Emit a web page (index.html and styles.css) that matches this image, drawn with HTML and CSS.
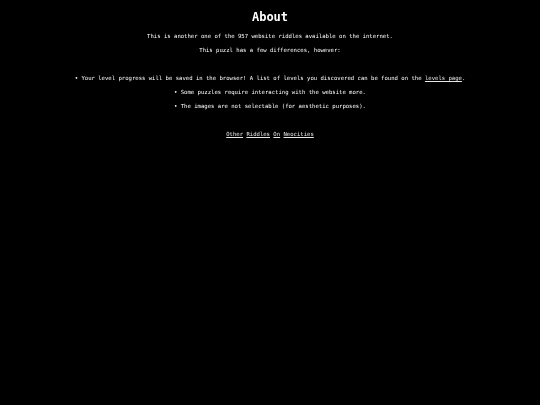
FILE: index.html
```html
<!DOCTYPE html>
<html>
<head>
<meta charset="utf-8">
<link rel="stylesheet" href="styles.css">
</head>
<body>
<main class="page">
  <h1 class="title">About</h1>
  <section class="intro">
    <p class="line">This is another one of the 957 website riddles available on the internet.</p>
    <p class="line">This puzzl has a few differences, however:</p>
  </section>
  <ul class="notes">
    <li class="line">• Your level progress will be saved in the browser! A list of levels you discovered can be found on the <a class="link" href="#">levels page</a>.</li>
    <li class="line">• Some puzzles require interacting with the website more.</li>
    <li class="line">• The images are not selectable (for aesthetic purposes).</li>
  </ul>
  <nav class="footer line">
    <a class="link" href="#">Other</a> <a class="link" href="#">Riddles</a> <a class="link" href="#">On</a> <a class="link" href="#">Neocities</a>
  </nav>
</main>
</body>
</html>
```

FILE: styles.css
```css
html, body {
  margin: 0;
  padding: 0;
  background: #000;
}
body {
  width: 540px;
  height: 405px;
  color: #ffffff;
  font-family: "DejaVu Sans Mono", "Liberation Mono", monospace;
}
.page {
  display: flex;
  flex-direction: column;
  align-items: center;
  padding-top: 8px;
  will-change: transform;
}
.title {
  margin: 0;
  font-size: 12px;
  line-height: 18px;
  font-weight: bold;
  color: #fff;
}
.intro, .notes {
  margin: 0;
  padding: 0;
  list-style: none;
  display: flex;
  flex-direction: column;
  align-items: center;
}
.intro {
  margin-top: 3px;
}
.notes {
  margin-top: 14px;
}
.line {
  margin: 0;
  font-size: 5.6px;
  line-height: 14px;
  height: 14px;
  white-space: nowrap;
}
.footer {
  margin-top: 14px;
}
.link {
  color: #e8e8e8;
  text-decoration: underline;
}
```
